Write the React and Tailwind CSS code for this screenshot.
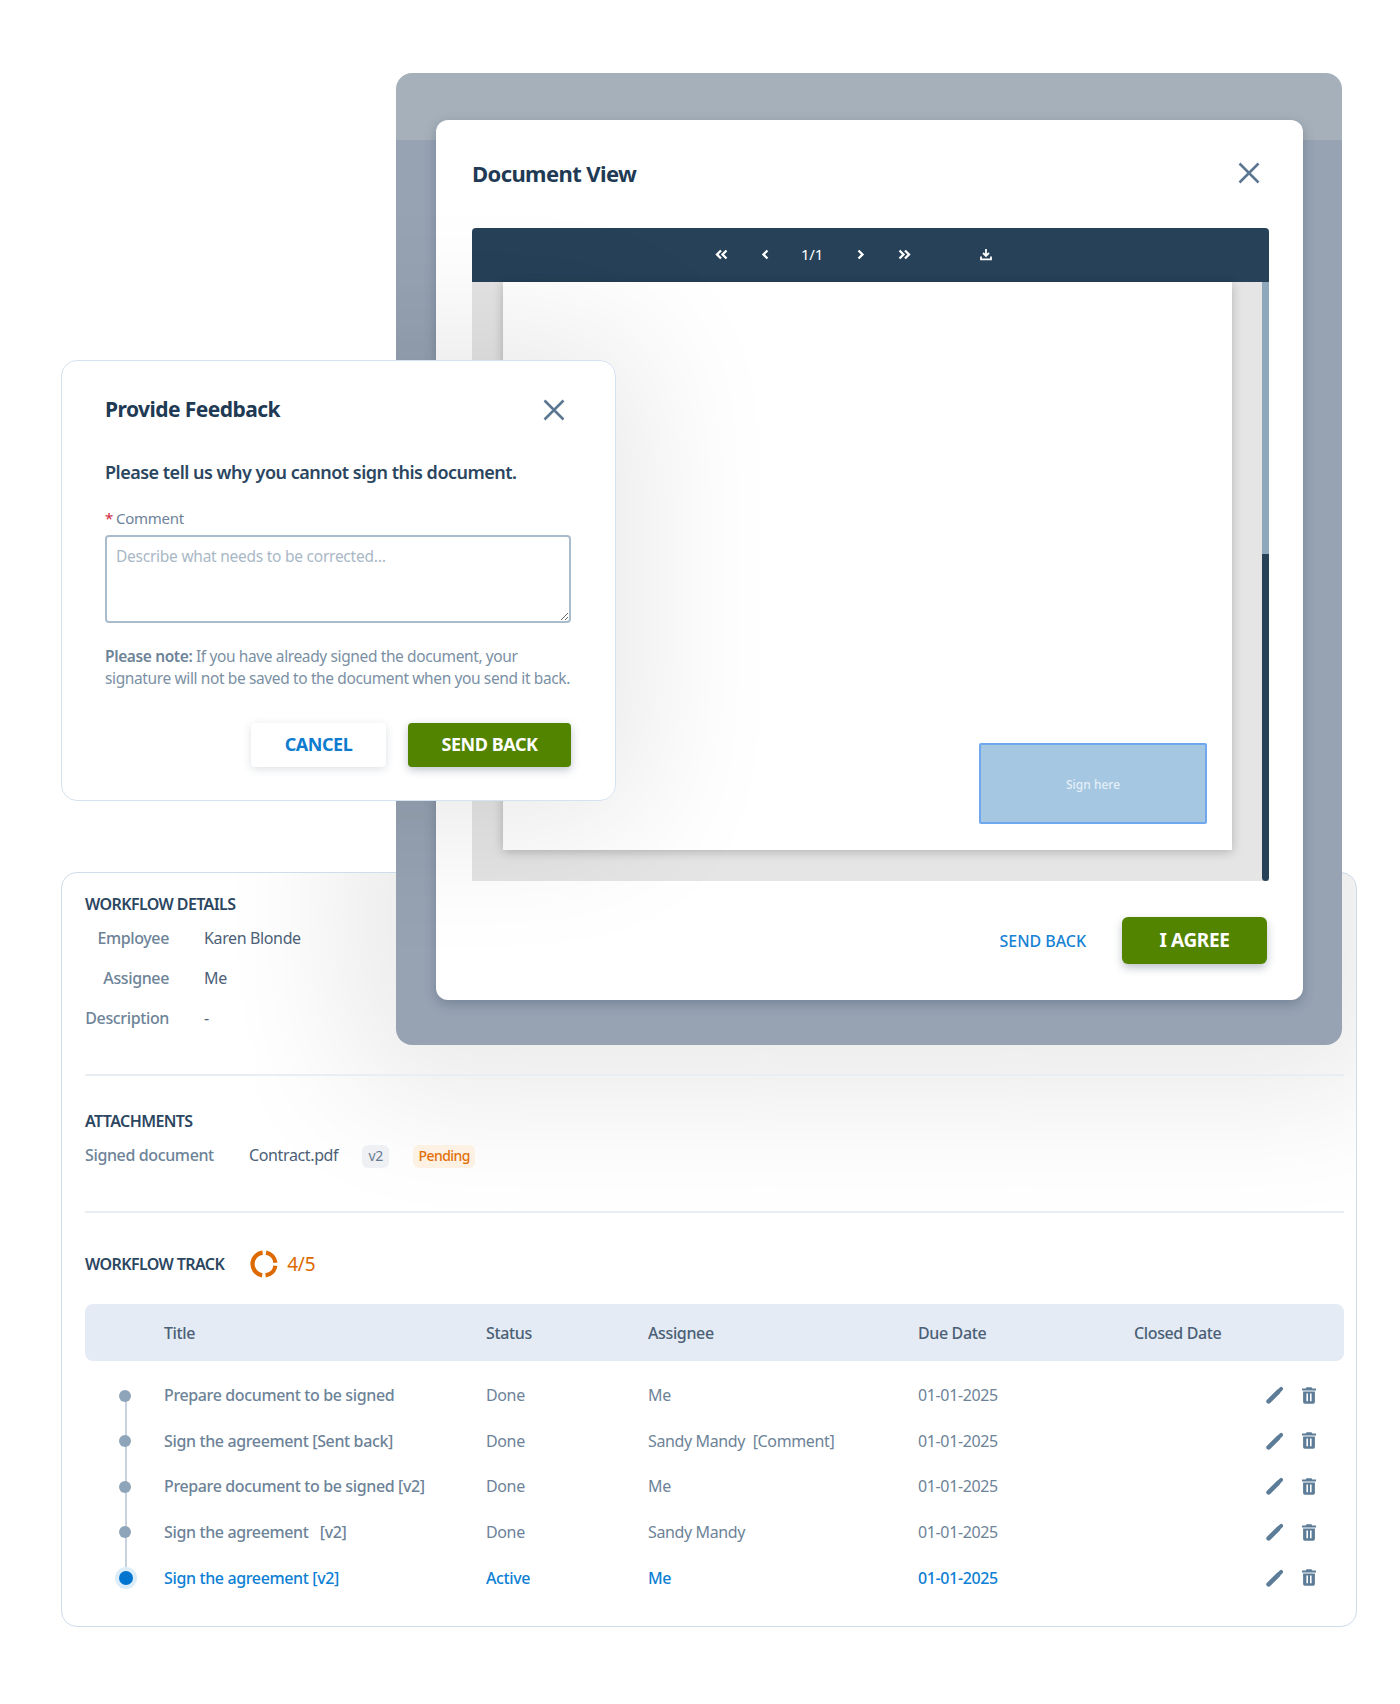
import React from "react";

const rows = [
  { title: "Prepare document to be signed", status: "Done", assignee: "Me" },
  { title: "Sign the agreement [Sent back]", status: "Done", assignee: "Sandy Mandy  [Comment]" },
  { title: "Prepare document to be signed [v2]", status: "Done", assignee: "Me" },
  { title: "Sign the agreement   [v2]", status: "Done", assignee: "Sandy Mandy" },
  { title: "Sign the agreement [v2]", status: "Active", assignee: "Me", active: true },
];

function CloseIcon() {
  return (
    <svg width="22" height="22" viewBox="0 0 22 22" fill="none" stroke="#5b7690" strokeWidth="2.5">
      <path d="M1.5 1.5l19 19M20.5 1.5l-19 19" />
    </svg>
  );
}

function Chevron({ double, left }) {
  return (
    <svg width="13" height="11" viewBox="0 0 13 11" fill="none" stroke="#fff" strokeWidth="2.3">
      <g transform={left ? "matrix(-1 0 0 1 13 0)" : undefined}>
        {double ? <path d="M1.5 1.5l4 4-4 4M7 1.5l4 4-4 4" /> : <path d="M4.5 1.5l4 4-4 4" />}
      </g>
    </svg>
  );
}

function PencilIcon() {
  return (
    <svg width="18" height="18" viewBox="0 0 18 18" fill="none">
      <path d="M2.6 15.4L12.2 5.8" stroke="#5d7c98" strokeWidth="4.6" strokeLinecap="round" />
      <path d="M13.8 4.2l1.4-1.4" stroke="#5d7c98" strokeWidth="3.8" strokeLinecap="round" />
    </svg>
  );
}

function TrashIcon() {
  return (
    <svg width="14" height="17" viewBox="0 0 14 17" fill="#5d7c98">
      <path d="M4.5 0.3h5l.8 1.2H14v2.1H0V1.5h3.7z" />
      <path d="M1.1 4.4h11.8V15a1.7 1.7 0 0 1-1.7 1.7H2.8A1.7 1.7 0 0 1 1.1 15zM4.4 6.6v7.6h1.6V6.6zM8 6.6v7.6h1.6V6.6z" fillRule="evenodd" />
    </svg>
  );
}

function DetailRow({ label, value }) {
  return (
    <div className="flex h-10 items-center">
      <span className="w-[84px] text-right text-[#6d8398] font-medium whitespace-nowrap">{label}</span>
      <span className="ml-[35px] text-[#4b6076]">{value}</span>
    </div>
  );
}

function WorkflowCard() {
  return (
    <section className="absolute left-[61px] top-[872px] h-[755px] w-[1296px] overflow-hidden rounded-2xl border border-[#cfdcea] bg-white pl-[23px] pr-3 text-base tracking-[-0.37px]">
      {/* sombra de la ventana de arriba */}
      <div className="absolute left-[334px] top-[-120px] h-[292px] w-[946px] rounded-2xl shadow-[0_0_140px_50px_rgba(0,0,0,0.09)]" />

      <div className="relative pt-[21px]">
        <h3 className="h-5 leading-5 font-semibold tracking-[-0.6px] text-[#2b4660]">WORKFLOW DETAILS</h3>
        <div className="mt-[4px]">
          <DetailRow label="Employee" value="Karen Blonde" />
          <DetailRow label="Assignee" value="Me" />
          <DetailRow label="Description" value="-" />
        </div>
        <div className="mt-[36px] h-0.5 bg-[#e9eef4]" />

        <h3 className="mt-[35px] h-5 leading-5 font-semibold tracking-[-0.6px] text-[#2b4660]">ATTACHMENTS</h3>
        <div className="mt-[12px] flex h-6 items-center">
          <span className="w-[164px] font-medium text-[#6d8398]">Signed document</span>
          <span className="text-[#4b6076]">Contract.pdf</span>
          <span className="ml-6 flex h-[23px] w-[27px] translate-y-px items-center justify-center rounded-md bg-[#eef0f4] text-sm text-[#667b90]">v2</span>
          <span className="ml-6 flex h-[23px] w-[62px] translate-y-px items-center justify-center rounded-md bg-[#fdf1e3] text-sm font-medium tracking-[-0.55px] text-[#e2700a]">Pending</span>
        </div>
        <div className="mt-[44px] h-0.5 bg-[#e9eef4]" />

        <div className="mt-[35px] flex h-8 items-center">
          <h3 className="font-semibold tracking-[-0.6px] text-[#2b4660]">WORKFLOW TRACK</h3>
          <svg className="ml-[25px]" width="30" height="30" viewBox="0 0 30 30" fill="none">
            <circle
              cx="15"
              cy="15"
              r="11.5"
              stroke="#dd6a00"
              strokeWidth="4.2"
              strokeDasharray="14.6 3.5 32.6 3.5 14.6 3.5"
              strokeDashoffset="-1.75"
            />
          </svg>
          <span className="ml-2 text-[19px] tracking-[-0.2px] text-[#dd6a00]">4/5</span>
        </div>

        <div className="mt-[24px] grid h-[57px] grid-cols-[79px_322px_162px_270px_216px_1fr] items-center rounded-lg bg-[#e4ebf4] font-medium text-[#4b6076]">
          <span />
          <span>Title</span>
          <span>Status</span>
          <span>Assignee</span>
          <span>Due Date</span>
          <span>Closed Date</span>
        </div>

        <div className="mt-[11.5px]">
          {rows.map((r, i) => (
            <div
              key={i}
              className={`grid h-[45.6px] grid-cols-[79px_322px_162px_270px_216px_1fr] items-center ${
                r.active ? "font-medium text-[#0d7fd4]" : "text-[#6d8398]"
              }`}
            >
              <div className="relative h-full">
                {i < rows.length - 1 && (
                  <span className="absolute left-[40px] top-1/2 h-full w-0.5 bg-[#c6d2dd]" />
                )}
                {r.active ? (
                  <span className="absolute left-[30px] top-[12px] flex h-[22px] w-[22px] items-center justify-center rounded-full bg-[#dcedfa]">
                    <span className="h-[14px] w-[14px] rounded-full bg-[#0075cf]" />
                  </span>
                ) : (
                  <span className="absolute left-[34px] top-[17px] h-3 w-3 rounded-full bg-[#8ea4b8]" />
                )}
              </div>
              <span className={`whitespace-pre ${r.active ? "" : "font-medium"}`}>{r.title}</span>
              <span>{r.status}</span>
              <span className="whitespace-pre">{r.assignee}</span>
              <span>01-01-2025</span>
              <div className="flex items-center justify-end gap-[18px] pr-[28px]">
                <PencilIcon />
                <TrashIcon />
              </div>
            </div>
          ))}
        </div>
      </div>
    </section>
  );
}

function DocumentWindow() {
  return (
    <section className="absolute left-[396px] top-[73px] h-[972px] w-[946px] overflow-hidden rounded-2xl bg-[linear-gradient(#a6b0ba_67px,#97a3b3_67px)] px-10 pt-[47px]">
      <div className="h-[880px] w-[867px] rounded-xl bg-white pl-[36px] pr-[34px] shadow-[0_4px_12px_rgba(40,60,90,0.3)]">
        <div className="flex h-[106px] items-center justify-between pr-[9px]">
          <h2 className="text-[22px] font-bold tracking-[-0.6px] text-[#1f3a54]">Document View</h2>
          <CloseIcon />
        </div>

        <div className="mt-[2px] flex h-[54px] items-center rounded-t bg-[#264158] pb-[2px] pl-[227px] text-white">
          <span className="flex w-11 justify-center"><Chevron double left /></span>
          <span className="flex w-11 justify-center"><Chevron left /></span>
          <span className="ml-[3px] flex w-11 justify-center text-[15px] tracking-[-0.3px]">1/1</span>
          <span className="ml-[4px] flex w-11 justify-center"><Chevron /></span>
          <span className="flex w-11 justify-center"><Chevron double /></span>
          <span className="ml-[38px] flex w-11 justify-center">
            <svg width="12" height="13" viewBox="0 0 12 13" fill="none" stroke="#fff" strokeWidth="1.8">
              <path d="M6 1v6.5M3 5l3 3 3-3M1 8.5V11.4h10V8.5" />
            </svg>
          </span>
        </div>

        <div className="relative h-[599px] bg-[#e5e5e5] pl-[31px]">
          <div className="flex h-[568px] w-[729px] items-end justify-end bg-white pb-[26px] pr-[25px] shadow-[0_2px_10px_rgba(0,0,0,0.22)]">
            <div className="flex h-[81px] w-[228px] items-center justify-center rounded-[2px] border-2 border-[#6fa8ee] bg-[#a5c7e1] pt-[2px] text-xs font-medium text-[#e4eff8]">
              Sign here
            </div>
          </div>
          <div className="absolute right-0 top-0 flex h-full w-[7px] flex-col">
            <div className="h-[272px] bg-[#8fa7ba]" />
            <div className="flex-1 rounded-b bg-[#264158]" />
          </div>
        </div>

        <div className="flex items-center justify-end gap-9 pr-[2px] pt-[36px]">
          <button className="text-base font-medium tracking-[-0.05px] text-[#1682d4]">SEND BACK</button>
          <button className="h-[47px] w-[145px] rounded-md bg-[#528400] pb-px text-[19px] font-bold tracking-[-0.4px] text-white shadow-[0_4px_8px_rgba(40,60,90,0.3)]">
            I AGREE
          </button>
        </div>
      </div>

      {/* sombra del modal de feedback */}
      <div className="pointer-events-none absolute inset-0 overflow-hidden">
        <div className="absolute left-[-335px] top-[287px] h-[441px] w-[555px] rounded-2xl shadow-[0_0_140px_30px_rgba(0,0,0,0.09)]" />
      </div>
    </section>
  );
}

function FeedbackWindow() {
  return (
    <section className="absolute left-[61px] top-[360px] h-[441px] w-[555px] rounded-2xl border border-[#d5e2ef] bg-white pl-[43px] pr-[44px]">
      <div className="flex h-[97px] items-center justify-between pr-[6px]">
        <h2 className="text-[21px] font-bold tracking-[-0.55px] text-[#1f3a54]">Provide Feedback</h2>
        <CloseIcon />
      </div>
      <p className="mt-[2px] h-6 text-[18px] leading-6 font-semibold tracking-[-0.5px] text-[#2b4660]">
        Please tell us why you cannot sign this document.
      </p>
      <label className="mt-[24px] flex h-5 items-center text-[15px] tracking-[-0.25px] text-[#6d8398]">
        <span className="mr-[3px] text-[#d0263c]">*</span>Comment
      </label>
      <textarea
        className="mt-[7px] block h-[88px] w-[466px] rounded border-2 border-[#a9bccd] px-[9px] py-[8px] text-[15.5px] tracking-[-0.25px] placeholder:text-[#a9b8c6]"
        placeholder="Describe what needs to be corrected…"
      />
      <p className="mt-[22px] text-[15.5px] leading-[22px] tracking-[-0.38px] whitespace-nowrap text-[#7b90a4]">
        <b className="font-semibold text-[#6d8398]">Please note:</b> If you have already signed the document, your
        <br />
        signature will not be saved to the document when you send it back.
      </p>
      <div className="mt-[34px] flex w-[466px] justify-end gap-[22px]">
        <button className="h-[44px] w-[135px] rounded bg-white pb-px text-[18px] font-bold tracking-[-0.45px] text-[#0d7ccf] shadow-[0_2px_8px_rgba(40,60,90,0.16)]">
          CANCEL
        </button>
        <button className="h-[44px] w-[163px] rounded bg-[#528400] pb-px text-[18px] font-bold tracking-[-0.45px] text-white shadow-[0_3px_8px_rgba(40,60,90,0.3)]">
          SEND BACK
        </button>
      </div>
    </section>
  );
}

export default function App() {
  return (
    <div className="relative h-[1704px] w-[1400px] overflow-hidden bg-white font-['Noto_Sans',sans-serif]">
      <WorkflowCard />
      <DocumentWindow />
      <FeedbackWindow />
    </div>
  );
}
